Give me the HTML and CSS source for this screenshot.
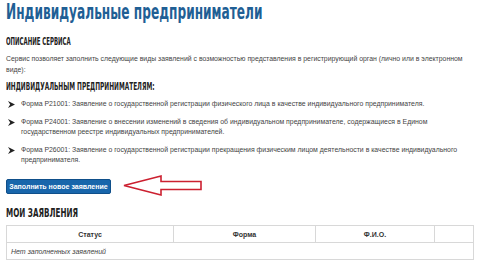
FILE: index.html
```html
<!DOCTYPE html>
<html lang="ru">
<head>
<meta charset="utf-8">
<link rel="stylesheet" href="styles.css">
</head>
<body>
<div class="page">
  <h1 class="title">Индивидуальные предприниматели</h1>
  <h2 class="section">ОПИСАНИЕ СЕРВИСА</h2>
  <p class="desc">Сервис позволяет заполнить следующие виды заявлений с возможностью представления в регистрирующий орган (лично или в электронном виде):</p>
  <h3 class="sub">ИНДИВИДУАЛЬНЫМ ПРЕДПРИНИМАТЕЛЯМ:</h3>
  <ul class="forms">
    <li><svg class="bullet" viewBox="0 0 8 8"><path d="M0 0 L8 4 L0 8 L2.5 4 Z"/></svg><span>Форма Р21001: Заявление о государственной регистрации физического лица в качестве индивидуального предпринимателя.</span></li>
    <li><svg class="bullet" viewBox="0 0 8 8"><path d="M0 0 L8 4 L0 8 L2.5 4 Z"/></svg><span>Форма Р24001: Заявление о внесении изменений в сведения об индивидуальном предпринимателе, содержащиеся в Едином государственном реестре индивидуальных предпринимателей.</span></li>
    <li><svg class="bullet" viewBox="0 0 8 8"><path d="M0 0 L8 4 L0 8 L2.5 4 Z"/></svg><span>Форма Р26001: Заявление о государственной регистрации прекращения физическим лицом деятельности в качестве индивидуального предпринимателя.</span></li>
  </ul>
  <div class="action">
    <button class="btn">Заполнить новое заявление</button>
    <svg class="arrow" width="84" height="24" viewBox="0 0 84 24"><path d="M2 11.5 L39 2 L39 7.5 L79 7.5 L79 15.5 L39 15.5 L39 21 Z"/></svg>
  </div>
  <h2 class="section mine">МОИ ЗАЯВЛЕНИЯ</h2>
  <table class="apps">
    <thead>
      <tr><th class="c1">Статус</th><th class="c2">Форма</th><th class="c3">Ф.И.О.</th><th class="c4"></th></tr>
    </thead>
    <tbody>
      <tr><td colspan="4" class="empty">Нет заполненных заявлений</td></tr>
    </tbody>
  </table>
</div>
</body>
</html>
```
FILE: styles.css
```css
html, body { margin: 0; padding: 0; background: #fff; }
.page {
  padding: 0 6px 0 6px;
  font-family: "Liberation Sans", Arial, sans-serif;
  color: #444;
}
.title, .section, .sub {
  font-family: "DejaVu Sans", sans-serif;
  font-weight: bold;
  transform-origin: left center;
  white-space: nowrap;
}
.title {
  margin: 0;
  font-size: 21px;
  line-height: 25px;
  color: #1f5f95;
  transform: scaleX(0.58);
}
.section {
  margin: 10px 0 0 0;
  font-size: 11px;
  line-height: 14px;
  color: #222;
  transform: scaleX(0.49);
}
.desc {
  margin: 4px 0 0 0;
  font-size: 6.9px;
  line-height: 11px;
  color: #444;
}
.sub {
  margin: 6px 0 0 0;
  font-size: 10px;
  line-height: 12px;
  color: #222;
  transform: scaleX(0.58);
}
.forms {
  list-style: none;
  margin: 6px 0 0 0;
  padding: 0;
  display: flex;
  flex-direction: column;
  gap: 8px;
}
.forms li {
  display: flex;
  align-items: flex-start;
  gap: 6px;
  font-size: 6.9px;
  line-height: 10px;
  color: #444;
}
.bullet {
  flex: none;
  width: 7px;
  height: 7px;
  margin: 1.5px 0 0 2px;
  fill: #222;
}
.action {
  margin-top: 9px;
  display: flex;
  align-items: center;
  gap: 11px;
}
.btn {
  width: 105px;
  height: 15px;
  padding: 0;
  border: 1px solid #0f4f8a;
  border-radius: 2px;
  background: #1866ab;
  color: #fff;
  font-family: "Liberation Sans", Arial, sans-serif;
  font-weight: bold;
  font-size: 7px;
  line-height: 13px;
}
.arrow {
  flex: none;
  fill: none;
  stroke: #cc2030;
  stroke-width: 1.6;
  stroke-linejoin: miter;
}
.section.mine {
  margin-top: 8px;
  font-size: 12px;
  transform: scaleX(0.6);
}
.apps {
  margin-top: 5px;
  width: 468px;
  border-collapse: collapse;
  font-size: 7px;
  color: #333;
}
.apps th, .apps td {
  border: 1px solid #d8d8d8;
  height: 16px;
  padding: 0 4px;
}
.apps th { font-weight: bold; text-align: center; }
.c1 { width: 158px; }
.c2 { width: 133px; }
.c3 { width: 110px; }
.empty { font-style: italic; text-align: left; color: #444; }
```
